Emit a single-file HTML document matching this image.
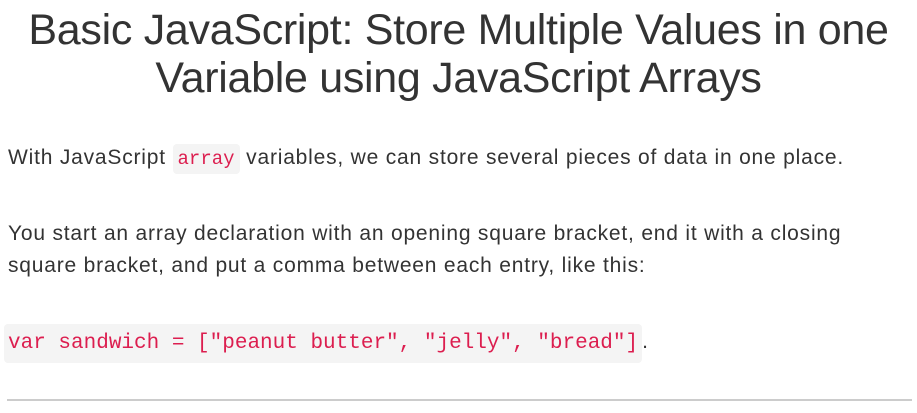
<!DOCTYPE html>
<html><head><style>
body{margin:0;width:917px;height:413px;overflow:hidden;background:#fff;font-family:"Liberation Sans",sans-serif;color:#333;}
h1{position:absolute;top:6px;left:0;width:917px;margin:0;text-align:center;font-weight:normal;font-size:43px;line-height:48px;color:#333;letter-spacing:-0.3px}
p{position:absolute;left:8px;margin:0;font-size:21px;line-height:32px;width:880px;letter-spacing:0.8px}
code{font-family:"Liberation Mono",monospace;color:#dc1e4f;background:#f4f4f4;border-radius:4px;padding:4px 5px;font-size:19px;letter-spacing:0}
.big{font-size:21px;padding:8px 4px 8px 4px}
hr{position:absolute;left:7px;top:399px;width:905px;margin:0;border:0;border-top:2px solid #ccc}
</style></head><body>
<h1>Basic JavaScript: Store Multiple Values in one<br>Variable using JavaScript Arrays</h1>
<p style="top:142px">With JavaScript <code>array</code> variables, we can store several pieces of data in one place.</p>
<p style="top:218px">You start an array declaration with an opening square bracket, end it with a closing<br>square bracket, and put a comma between each entry, like this:</p>
<p style="top:326px;left:4px;letter-spacing:0"><code class="big">var sandwich = ["peanut butter", "jelly", "bread"]</code>.</p>
<hr>
</body></html>
